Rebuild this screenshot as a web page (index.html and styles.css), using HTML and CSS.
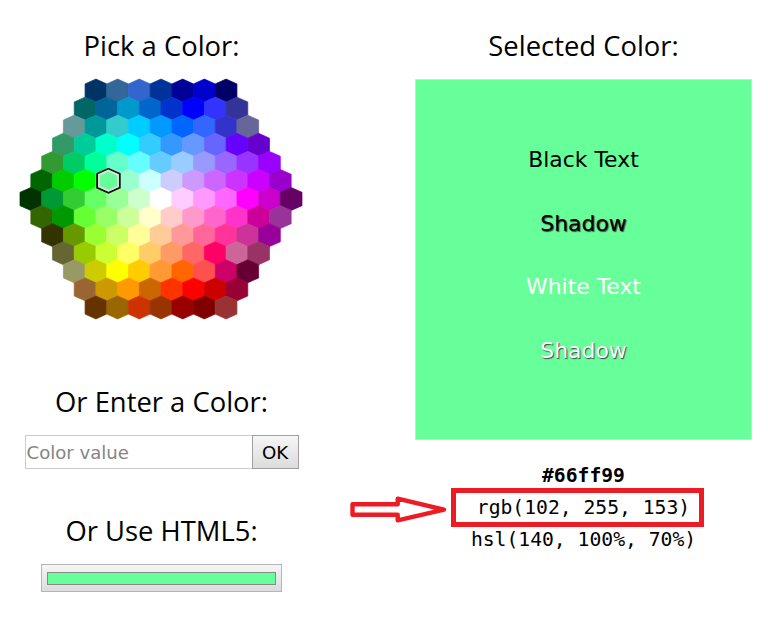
FILE: index.html
```
<!DOCTYPE html>
<html lang="en">
<head>
<meta charset="utf-8">
<title>Color Picker</title>
<link rel="stylesheet" href="styles.css">
</head>
<body>
<main class="picker">
  <section class="choose">
    <h3 class="heading pick">Pick a Color:</h3>
    <svg class="colormap" id="colormap" viewBox="0 0 234 199"></svg>
    <h3 class="heading enter">Or Enter a Color:</h3>
    <div class="entry">
      <input class="entry-field" type="text" placeholder="Color value">
      <button class="entry-ok" type="button">OK</button>
    </div>
    <h3 class="heading html5">Or Use HTML5:</h3>
    <div class="swatch-button"><div class="swatch"></div></div>
  </section>
  <section class="selected">
    <h3 class="heading chosen">Selected Color:</h3>
    <div class="preview">
      <p class="black"><span>Black Text</span></p>
      <p class="black shadow"><span>Shadow</span></p>
      <p class="white"><span>White Text</span></p>
      <p class="white shadow"><span>Shadow</span></p>
    </div>
    <div class="values">
      <div class="value hex">#66ff99</div>
      <div class="value rgb">rgb(102, 255, 153)
        <svg class="arrow" viewBox="0 0 100 30" width="100" height="30"><path d="M2.5 9.3H47.7V3.7L94 14.7L47.7 25.3V19.7H2.5Z" fill="#fff" stroke="#ed1c24" stroke-width="4.4" stroke-linejoin="round"/></svg>
      </div>
      <div class="value hsl">hsl(140, 100%, 70%)</div>
    </div>
  </section>
</main>
<script src="script.js"></script>
</body>
</html>
```
FILE: styles.css
```
* { box-sizing: border-box; }
body { margin: 0; background: #fff; color: #000; font-family: "DejaVu Sans", Verdana, sans-serif; }
.picker { display: grid; grid-template-columns: 323px 337px; column-gap: 92px; height: 626px; overflow: hidden; }
.choose, .selected { display: flex; flex-direction: column; align-items: center; }
.heading { margin: 0; font: 400 27.4px/40px "Open Sans", "Noto Sans", sans-serif; white-space: nowrap; }
.pick, .chosen { margin-top: 26px; }
.colormap { display: block; width: 282px; height: 240px; margin: 13px 0 0 -2px; overflow: visible; flex: none; }
.enter { margin-top: 63px; }
.entry { display: flex; width: 274px; height: 34px; margin-top: 13px; }
.entry-field { flex: 1; min-width: 0; height: 34px; padding: 0 1px; border: 1px solid #ccc; border-right: 0; border-radius: 0; font: 18.1px "DejaVu Sans", sans-serif; outline: 0; }
.entry-field::placeholder { color: #858585; opacity: 1; }
.entry-ok { width: 47px; height: 34px; padding: 0; border: 1px solid #a0a0a0; border-radius: 0; background: linear-gradient(#f6f6f6, #dcdcdc); font: 18.2px "DejaVu Sans", sans-serif; color: #000; }
.html5 { margin-top: 42px; }
.swatch-button { width: 241px; height: 28px; margin-top: 13px; padding: 7px 5px; border: 1px solid #b5b5b5; background: linear-gradient(#f6f6f6, #dcdcdc); }
.swatch { height: 13px; border: 1px solid #888; background: #66ff99; }
.preview { width: 337px; height: 361px; margin-top: 13px; padding-top: 48px; border: 1px solid #d3dfd7; background: #66ff99; text-align: center; flex: none; }
.preview p { margin: 0; font-size: 21.9px; line-height: 63.5px; }
.white { color: #fff; }
.black.shadow { text-shadow: 1px 1px 1px #444; }
.white.shadow { text-shadow: 1px 1px 1px #444; }
.values { display: flex; flex-direction: column; align-items: center; margin-top: 20px; font-family: "DejaVu Sans Mono", monospace; font-size: 19.7px; }
.value { position: relative; line-height: 32px; white-space: nowrap; }
.hex { height: 28px; font-weight: 700; line-height: 31px; }
.rgb { width: 253px; height: 39px; margin-left: -13px; padding-left: 13px; border: 5px solid #ed1c24; line-height: 29px; text-align: center; }
.hsl { line-height: 26px; }
.arrow { position: absolute; left: -106px; top: 2px; }
```
FILE: script.js
```
const rows = [
  "003366 336699 3366cc 003399 000099 0000cc 000066",
  "006666 006699 0099cc 0066cc 0033cc 0000ff 3333ff 333399",
  "669999 009999 33cccc 00ccff 0099ff 0066ff 3366ff 3333cc 666699",
  "339966 00cc99 00ffcc 00ffff 33ccff 3399ff 6699ff 6666ff 6600ff 6600cc",
  "339933 00cc66 00ff99 66ffcc 66ffff 66ccff 99ccff 9999ff 9966ff 9933ff 9900ff",
  "006600 00cc00 00ff00 66ff99 99ffcc ccffff ccccff cc99ff cc66ff cc33ff cc00ff 9900cc",
  "003300 009933 33cc33 66ff66 99ff99 ccffcc ffffff ffccff ff99ff ff66ff ff00ff cc00cc 660066",
  "336600 009900 66ff33 99ff66 ccff99 ffffcc ffcccc ff99cc ff66cc ff33cc cc0099 993399",
  "333300 669900 99ff33 ccff66 ffff99 ffcc99 ff9999 ff6699 ff3399 cc3399 990099",
  "666633 99cc00 ccff33 ffff66 ffcc66 ff9966 ff6666 ff0066 cc6699 993366",
  "999966 cccc00 ffff00 ffcc00 ff9933 ff6600 ff5050 cc0066 660033",
  "996633 cc9900 ff9900 cc6600 ff3300 ff0000 cc0000 990033",
  "663300 996600 cc3300 993300 990000 800000 993333"
];
const map = document.getElementById("colormap");
function hex(cx, cy, scale, attrs) {
  const w = 9 * scale, h = 9.5 * scale, s = 5.5 * scale;
  const el = document.createElementNS("http://www.w3.org/2000/svg", "polygon");
  el.setAttribute("points", `${cx},${cy - h} ${cx + w},${cy - s} ${cx + w},${cy + s} ${cx},${cy + h} ${cx - w},${cy + s} ${cx - w},${cy - s}`);
  for (const name in attrs) el.setAttribute(name, attrs[name]);
  map.appendChild(el);
}
rows.forEach((row, r) => {
  const colors = row.split(" ");
  const left = 117 - colors.length * 9;
  colors.forEach((c, i) => hex(left + 9 + i * 18, r * 15 + 9.5, 1, { fill: "#" + c, stroke: "#" + c, "stroke-width": 0.6 }));
});
// Marker around the selected color
hex(73.4, 84.3, 1.04, { fill: "#66ff99", stroke: "#111", "stroke-width": 1.6 });
hex(73.4, 84.3, 0.88, { fill: "#66ff99", stroke: "#e0e0e0", "stroke-width": 1.5 });
```
